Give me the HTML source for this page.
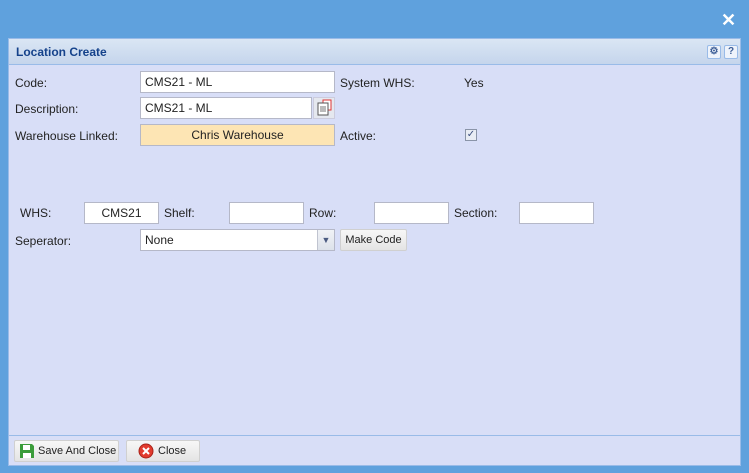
<!DOCTYPE html>
<html><head><style>
*{box-sizing:border-box;margin:0;padding:0}
body{width:749px;height:473px;background:#5fa1dd;font-family:"Liberation Sans",sans-serif;font-size:12px;color:#222;position:relative;overflow:hidden}
.a{position:absolute}
#panel{left:8px;top:38px;width:733px;height:428px;background:#d8def7;border:1px solid #99bbe8}
#hdr{left:0;top:0;width:731px;height:26px;background:linear-gradient(#dae6f4,#c5d5ec);border-bottom:1px solid #99bbe8;font-weight:bold;color:#15428b;font-size:12px;padding:6px 0 0 7px}
.in{position:absolute;background:#fff;border:1px solid #b5b8c8;height:22px;padding:3px 4px;font-size:12px}
.l{position:absolute;font-size:12px}
.btn{position:absolute;border:1px solid #d0d0d0;border-radius:2px;background:linear-gradient(#f7f7f7,#e4e4e4);font-size:11px}
.tb{position:absolute;width:14px;height:14px;border:1px solid #99bbe8;background:#eef3fb;border-radius:2px;font-size:10px;font-weight:bold;color:#3d5e97;text-align:center;line-height:12px}
</style></head><body>
<div class="a" style="left:721px;top:11px;color:#fff;font-size:18px;font-weight:bold;line-height:18px">✕</div>
<div class="a" id="panel">
<div class="a" id="hdr">Location Create</div>
<div class="tb" style="left:698px;top:6px">⚙</div>
<div class="tb" style="left:715px;top:6px">?</div>
<div class="l" style="left:6px;top:37px">Code:</div>
<div class="in" style="left:131px;top:32px;width:195px">CMS21 - ML</div>
<div class="l" style="left:331px;top:37px">System WHS:</div>
<div class="l" style="left:455px;top:37px">Yes</div>
<div class="l" style="left:6px;top:63px">Description:</div>
<div class="in" style="left:131px;top:58px;width:172px">CMS21 - ML</div>
<div class="a" style="left:304px;top:58px;width:22px;height:22px;background:#e5e8ef;border:1px solid #ccd">
<svg width="20" height="20" viewBox="0 0 20 20"><rect x="9" y="2" width="8" height="10" fill="#fff" stroke="#d33"/><rect x="4" y="5" width="10" height="12" fill="#fff" stroke="#555"/><path d="M6 9h6M6 11h6M6 13h6" stroke="#777"/></svg></div>
<div class="l" style="left:6px;top:90px">Warehouse Linked:</div>
<div class="in" style="left:131px;top:85px;width:195px;background:#fde5b4;text-align:center">Chris Warehouse</div>
<div class="l" style="left:331px;top:90px">Active:</div>
<div class="a" style="left:456px;top:90px;width:12px;height:12px;border:1px solid #8a94a8;background:#e8ecf4;font-size:10px;line-height:10px;text-align:center;color:#3b4f80">✓</div>
<div class="l" style="left:11px;top:167px">WHS:</div>
<div class="in" style="left:75px;top:163px;width:75px;text-align:center">CMS21</div>
<div class="l" style="left:155px;top:167px">Shelf:</div>
<div class="in" style="left:220px;top:163px;width:75px"></div>
<div class="l" style="left:300px;top:167px">Row:</div>
<div class="in" style="left:365px;top:163px;width:75px"></div>
<div class="l" style="left:445px;top:167px">Section:</div>
<div class="in" style="left:510px;top:163px;width:75px"></div>
<div class="l" style="left:6px;top:195px">Seperator:</div>
<div class="in" style="left:131px;top:190px;width:195px">None</div>
<div class="a" style="left:308px;top:191px;width:17px;height:20px;background:linear-gradient(#f0f2f6,#dde2ea);border-left:1px solid #c0c4d0;color:#4a5a80;font-size:9px;text-align:center;line-height:20px">▼</div>
<div class="btn" style="left:331px;top:190px;width:67px;height:22px;text-align:center;line-height:20px">Make Code</div>
<div class="a" style="left:0;top:396px;width:731px;height:1px;background:#99bbe8"></div>
<div class="btn" style="left:5px;top:401px;width:105px;height:22px;line-height:20px;padding-left:23px">Save And Close
<svg class="a" style="left:4px;top:2px" width="16" height="16" viewBox="0 0 16 16"><path d="M1 1h12l2 2v12H1z" fill="#3a9c3a"/><rect x="4" y="2" width="7" height="5" fill="#fff"/><rect x="4" y="10" width="8" height="5" fill="#fff"/></svg></div>
<div class="btn" style="left:117px;top:401px;width:74px;height:22px;line-height:20px;padding-left:31px">Close
<svg class="a" style="left:11px;top:2px" width="16" height="16" viewBox="0 0 16 16"><circle cx="8" cy="8" r="7" fill="#e23b2e" stroke="#a82218"/><path d="M5 5l6 6M11 5l-6 6" stroke="#fff" stroke-width="2"/></svg></div>
</div>
</body></html>
